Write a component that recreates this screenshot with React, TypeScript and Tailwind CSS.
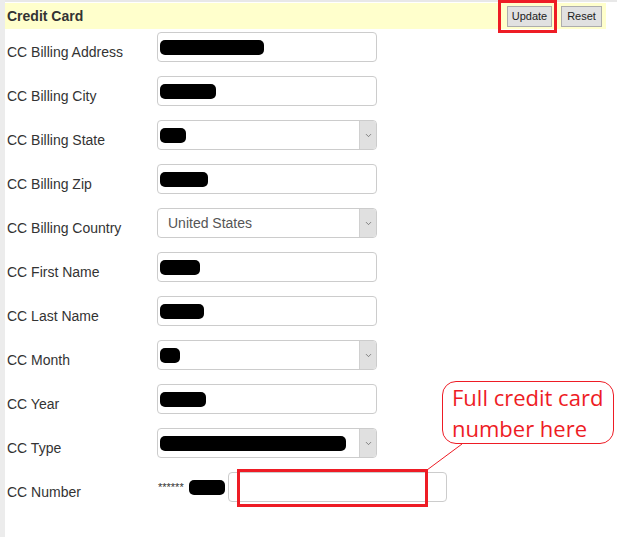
import { ChevronDown } from 'lucide-react';

type Field = {
  label: string;
  kind: 'input' | 'select';
  blob?: number;
  text?: string;
};

const fields: Field[] = [
  { label: 'CC Billing Address', kind: 'input', blob: 104 },
  { label: 'CC Billing City', kind: 'input', blob: 56 },
  { label: 'CC Billing State', kind: 'select', blob: 26 },
  { label: 'CC Billing Zip', kind: 'input', blob: 48 },
  { label: 'CC Billing Country', kind: 'select', text: 'United States' },
  { label: 'CC First Name', kind: 'input', blob: 40 },
  { label: 'CC Last Name', kind: 'input', blob: 44 },
  { label: 'CC Month', kind: 'select', blob: 20 },
  { label: 'CC Year', kind: 'input', blob: 46 },
  { label: 'CC Type', kind: 'select', blob: 186 },
];

function Blob({ w }: { w: number }) {
  return <span className="block h-[15px] rounded-[5px] bg-black" style={{ width: w }} />;
}

function Control({ field }: { field: Field }) {
  return (
    <div className="mt-[2px] flex h-[30px] w-[220px] items-center rounded-[4px] border border-[#cccccc] bg-white">
      <div className="flex flex-1 items-center px-[2px]">
        {field.text ? (
          <span className="pl-[8px] text-[14px] text-[#555555]">{field.text}</span>
        ) : (
          field.blob && <Blob w={field.blob} />
        )}
      </div>
      {field.kind === 'select' && (
        <div className="flex h-full w-[17px] items-center justify-center rounded-r-[3px] border-l border-[#d0d0d0] bg-[#e0e0e0]">
          <ChevronDown size={9} strokeWidth={1.8} className="text-[#555555]" />
        </div>
      )}
    </div>
  );
}

export default function App() {
  return (
    <div className="relative flex h-[537px] w-[617px] overflow-hidden bg-white font-['Liberation_Sans',Arial,sans-serif] text-[#333333]">
      {/* left strip */}
      <div className="w-[5px] shrink-0 bg-[#ececec]" />

      <div className="flex flex-1 flex-col border-t-2 border-[#e8e8e8]">
        {/* header */}
        <div className="mt-[1px] flex h-[26px] w-[601px] items-center justify-between bg-[#ffffcc] pl-[2px] pr-[4px]">
          <span className="text-[14px] font-bold text-[#333333]">Credit Card</span>
          <div className="flex gap-[9px]">
            <button className="h-[21px] w-[45px] border border-[#adadad] bg-[#e1e1e1] text-[11px] text-[#222222]">
              Update
            </button>
            <button className="h-[21px] w-[41px] border border-[#adadad] bg-[#e1e1e1] text-[11px] text-[#222222]">
              Reset
            </button>
          </div>
        </div>

        {/* rows */}
        <div className="mt-[1px] flex flex-col">
          {fields.map((f) => (
            <div key={f.label} className="flex h-[44px] items-start">
              <div className="w-[152px] pl-[2px] pt-[12px] text-[14px] leading-[20px]">{f.label}</div>
              <Control field={f} />
            </div>
          ))}
          <div className="flex h-[44px] items-start">
            <div className="w-[152px] pl-[2px] pt-[12px] text-[14px] leading-[20px]">CC Number</div>
            <div className="mt-[2px] flex h-[30px] items-center gap-[5px] pl-[1px]">
              <span className="text-[11px] text-[#333333]">******</span>
              <Blob w={36} />
            </div>
            <div className="ml-[3px] mt-[2px] h-[30px] w-[219px] rounded-[4px] border border-[#cccccc] bg-white" />
          </div>
        </div>
      </div>

      {/* annotations */}
      <div className="absolute left-[498px] top-0 h-[33px] w-[59px] border-[3px] border-[#ee1c25]" />
      <div className="absolute left-[237px] top-[469px] h-[38px] w-[191px] border-[3px] border-[#ee1c25]" />
      <div className="absolute left-[442px] top-[381px] flex h-[63px] w-[172px] flex-col justify-center rounded-[14px] border border-[#ee1c25] bg-white pl-[9px] font-['Open_Sans',sans-serif] text-[22px] leading-[31px] text-[#ee1c25]">
        <span>Full credit card</span>
        <span>number here</span>
      </div>
      <svg className="absolute left-0 top-0" width="617" height="537">
        <line x1="462" y1="444" x2="427" y2="470" stroke="#ee1c25" strokeWidth="1" />
      </svg>
    </div>
  );
}
